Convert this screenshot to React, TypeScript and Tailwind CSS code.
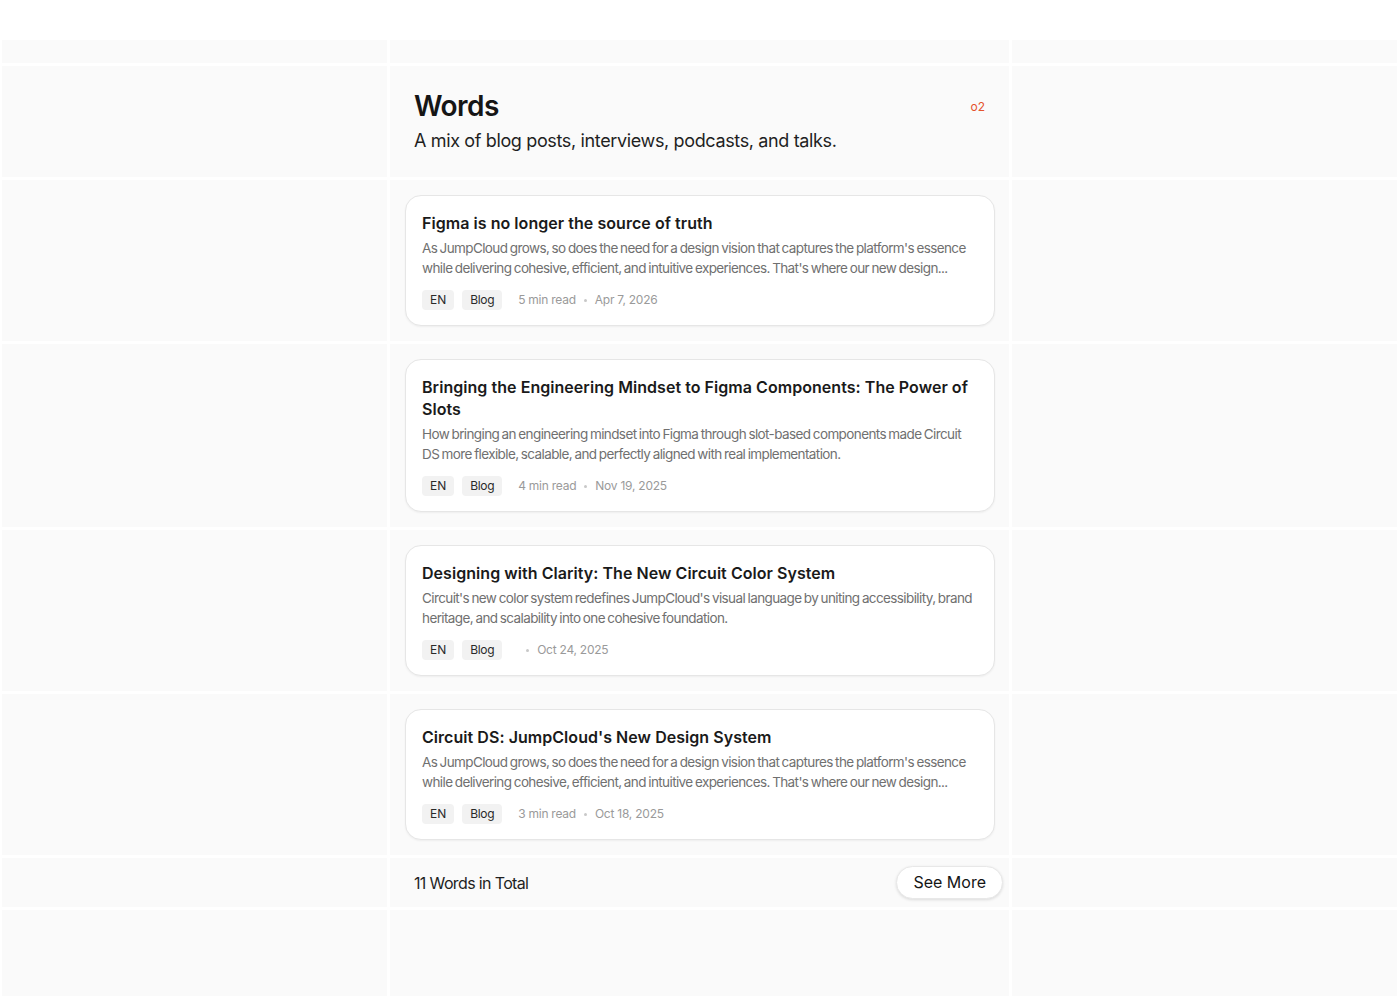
import React from 'react';

interface Post {
  title: string;
  excerpt: string;
  lang: string;
  kind: string;
  readTime: string;
  date: string;
}

const posts: Post[] = [
  {
    title: 'Figma is no longer the source of truth',
    excerpt:
      "As JumpCloud grows, so does the need for a design vision that captures the platform's essence while delivering cohesive, efficient, and intuitive experiences. That's where our new design...",
    lang: 'EN',
    kind: 'Blog',
    readTime: '5 min read',
    date: 'Apr 7, 2026',
  },
  {
    title: 'Bringing the Engineering Mindset to Figma Components: The Power of Slots',
    excerpt:
      'How bringing an engineering mindset into Figma through slot-based components made Circuit DS more flexible, scalable, and perfectly aligned with real implementation.',
    lang: 'EN',
    kind: 'Blog',
    readTime: '4 min read',
    date: 'Nov 19, 2025',
  },
  {
    title: 'Designing with Clarity: The New Circuit Color System',
    excerpt:
      "Circuit's new color system redefines JumpCloud's visual language by uniting accessibility, brand heritage, and scalability into one cohesive foundation.",
    lang: 'EN',
    kind: 'Blog',
    readTime: '',
    date: 'Oct 24, 2025',
  },
  {
    title: "Circuit DS: JumpCloud's New Design System",
    excerpt:
      "As JumpCloud grows, so does the need for a design vision that captures the platform's essence while delivering cohesive, efficient, and intuitive experiences. That's where our new design...",
    lang: 'EN',
    kind: 'Blog',
    readTime: '3 min read',
    date: 'Oct 18, 2025',
  },
];

function Side() {
  return <div className="bg-[#fafafa]" />;
}

function PostCard({ post }: { post: Post }) {
  return (
    <div className="rounded-2xl border border-[#e6e6e6] bg-white px-4 pt-4 pb-[15px] shadow-[0_1px_2px_rgba(0,0,0,0.05)]">
      <h3 className="text-[16px] font-semibold leading-[22px] tracking-[0.003em] text-[#1a1a1a]">
        {post.title}
      </h3>
      <p className="mt-1 text-[13.5px] leading-[20px] tracking-[-0.045em] [word-spacing:-0.06em] text-[#707070]">
        {post.excerpt}
      </p>
      <div className="mt-3 flex h-5 items-center text-[12px]">
        <span className="flex h-5 items-center rounded-[4px] bg-[#f2f2f2] px-2 text-[#2a2a2a]">
          {post.lang}
        </span>
        <span className="ml-2 flex h-5 items-center rounded-[4px] bg-[#f2f2f2] px-2 tracking-[-0.03em] text-[#2a2a2a]">
          {post.kind}
        </span>
        <div className="ml-4 flex items-center gap-2 tracking-[-0.02em] text-[#9a9a9a]">
          <span>{post.readTime}</span>
          <span className="h-[3px] w-[3px] rounded-full bg-[#c8c8c8]" />
          <span>{post.date}</span>
        </div>
      </div>
    </div>
  );
}

export default function App() {
  return (
    <div
      className="min-h-screen bg-white pt-10 pl-[2px] pr-[3px]"
      style={{ fontFamily: 'Inter, "Noto Sans", sans-serif' }}
    >
      <div className="grid grid-cols-[385px_619px_1fr] gap-[3px]">
        {/* top strip */}
        <Side />
        <div className="h-[23px] bg-[#fafafa]" />
        <Side />

        {/* header */}
        <Side />
        <div className="flex items-start justify-between bg-[#fafafa] px-6 py-[22px]">
          <div>
            <h1 className="text-[28px] font-semibold leading-[36px] tracking-[-0.02em] text-[#151515]">
              Words
            </h1>
            <p className="mt-[3px] text-[18px] leading-[28px] tracking-[-0.02em] text-[#1f1f1f]">
              A mix of blog posts, interviews, podcasts, and talks.
            </p>
          </div>
          <span className="mt-[10px] text-[12px] text-[#e5532d]">o2</span>
        </div>
        <Side />

        {posts.map((post) => (
          <React.Fragment key={post.title}>
            <Side />
            <div className="bg-[#fafafa] py-[15px] pl-[15px] pr-[14px]">
              <PostCard post={post} />
            </div>
            <Side />
          </React.Fragment>
        ))}

        {/* footer */}
        <Side />
        <div className="flex items-center justify-between bg-[#fafafa] py-2 pl-6 pr-[6px]">
          <span className="text-[16px] tracking-[-0.04em] text-[#1f1f1f]">11 Words in Total</span>
          <button className="rounded-full border border-[#e8e8e8] bg-white px-4 py-1 text-[16px] leading-[23px] text-[#151515] shadow-[0_1px_3px_rgba(0,0,0,0.12)]">
            See More
          </button>
        </div>
        <Side />

        {/* bottom */}
        <Side />
        <div className="h-[88px] bg-[#fafafa]" />
        <Side />
      </div>
    </div>
  );
}
